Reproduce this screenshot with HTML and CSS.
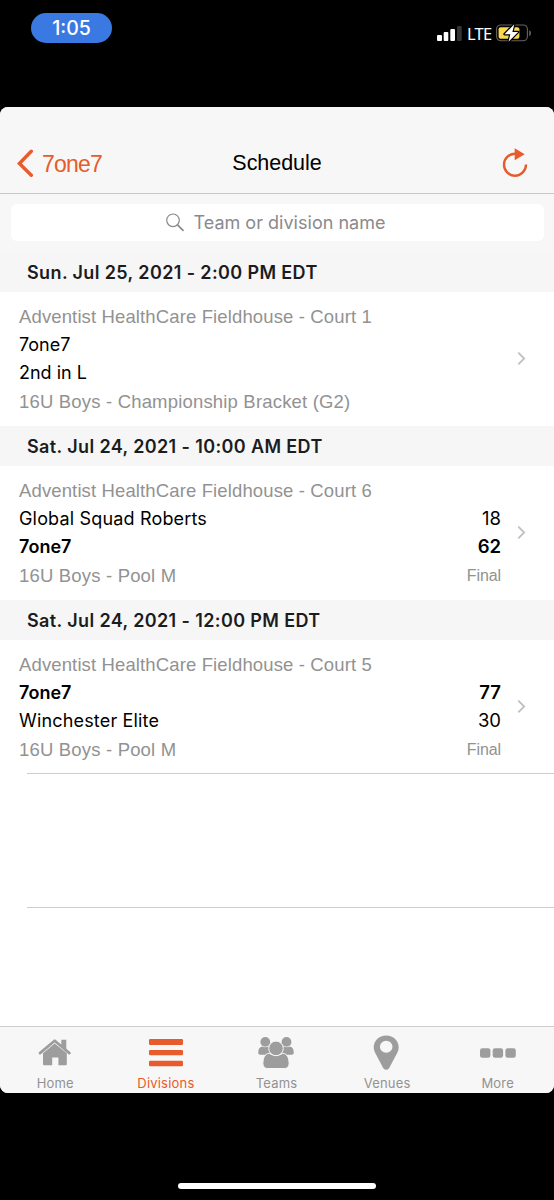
FILE: index.html
```html
<!DOCTYPE html>
<html lang="en">
<head>
<meta charset="utf-8">
<title>Schedule</title>
<link rel="stylesheet" href="styles.css">
</head>
<body>
<div class="statusbar">
  <div class="clock"><span>1:05</span></div>
  <div class="signals">
    <svg width="25" height="16" viewBox="0 0 25 16"><g fill="#fff"><rect x="0" y="10" width="5" height="6" rx="1"/><rect x="6.7" y="7" width="4.6" height="9" rx="1"/><rect x="13.3" y="4" width="4.7" height="12" rx="1"/></g><rect x="20" y="1" width="4.7" height="15" rx="1" fill="#343434"/></svg>
    <span class="carrier">LTE</span>
    <svg class="battery" width="36" height="18" viewBox="0 0 36 18"><rect x=".6" y="1" width="30.8" height="15.8" rx="4.3" fill="none" stroke="#68645c" stroke-width="1.1"/><rect x="2.6" y="3.2" width="20.8" height="11.5" rx="2" fill="#f8d94b"/><path d="M33.2 6.2c2.4.6 2.4 5.2 0 5.8z" fill="#68645c"/><path d="M18.3.2 8.5 10.2h5.8l-1.8 7.6 9.7-9.9h-5.8z" fill="#fff" stroke="#000" stroke-width="2.4" paint-order="stroke" stroke-linejoin="round"/></svg>
  </div>
</div>
<main class="app">
  <header class="nav">
    <div class="back">
      <svg width="17" height="29" viewBox="0 0 17 29"><path d="M14.3 2.3 2.4 14.5l11.9 11.7" fill="none" stroke="#e75b2c" stroke-width="3.4" stroke-linecap="round"/></svg>
      <span class="back-label">7one7</span>
    </div>
    <h1 class="title"><span>Schedule</span></h1>
    <svg class="refresh" width="26" height="30" viewBox="0 0 26 30"><path d="M13.5 5.7A11 11 0 1 0 24 16.5" fill="none" stroke="#e75b2c" stroke-width="2.4"/><path d="M12.7.2v12.1l10-6.1z" fill="#e75b2c"/></svg>
  </header>
  <div class="search">
    <div class="field">
      <svg width="18" height="19" viewBox="0 0 18 19"><circle cx="7" cy="7.3" r="6.3" fill="none" stroke="#8a8a8e" stroke-width="1.2"/><path d="m11.5 11.8 5.5 5.5" stroke="#8a8a8e" stroke-width="1.7" stroke-linecap="round"/></svg>
      <span class="placeholder">Team or division name</span>
    </div>
  </div>
  <section>
    <h2 class="date">Sun. Jul 25, 2021 - 2:00 PM EDT</h2>
    <div class="game">
      <p class="meta venue"><span>Adventist HealthCare Fieldhouse - Court 1</span></p>
      <div class="team"><span>7one7</span></div>
      <div class="team"><span>2nd in L</span></div>
      <p class="meta pool"><span>16U Boys - Championship Bracket (G2)</span></p>
      <svg class="chevron" width="9" height="14" viewBox="0 0 9 14"><path d="m1.3 .6 5.9 5.9-5.9 5.9" fill="none" stroke="#c0c0c2" stroke-width="1.8"/></svg>
    </div>
  </section>
  <section>
    <h2 class="date">Sat. Jul 24, 2021 - 10:00 AM EDT</h2>
    <div class="game">
      <p class="meta venue"><span>Adventist HealthCare Fieldhouse - Court 6</span></p>
      <div class="team"><span class="long">Global Squad Roberts</span><span class="score">18</span></div>
      <div class="team winner"><span>7one7</span><span class="score">62</span></div>
      <p class="meta pool"><span>16U Boys - Pool M</span><span class="final">Final</span></p>
      <svg class="chevron" width="9" height="14" viewBox="0 0 9 14"><path d="m1.3 .6 5.9 5.9-5.9 5.9" fill="none" stroke="#c0c0c2" stroke-width="1.8"/></svg>
    </div>
  </section>
  <section>
    <h2 class="date">Sat. Jul 24, 2021 - 12:00 PM EDT</h2>
    <div class="game">
      <p class="meta venue"><span>Adventist HealthCare Fieldhouse - Court 5</span></p>
      <div class="team winner"><span>7one7</span><span class="score">77</span></div>
      <div class="team"><span class="long">Winchester Elite</span><span class="score">30</span></div>
      <p class="meta pool"><span>16U Boys - Pool M</span><span class="final">Final</span></p>
      <svg class="chevron" width="9" height="14" viewBox="0 0 9 14"><path d="m1.3 .6 5.9 5.9-5.9 5.9" fill="none" stroke="#c0c0c2" stroke-width="1.8"/></svg>
    </div>
  </section>
  <div class="empty-row"></div>
  <nav class="tabs">
    <div class="tab"><svg width="34" height="34" viewBox="0 0 34 34"><path d="M2 17.1 16.7 4.7l14.7 12.4" fill="none" stroke="#9d9d9d" stroke-width="2.7" stroke-linecap="round" stroke-linejoin="round"/><path d="M23.3 3.8h5v10l-5-4.2z" fill="#9d9d9d"/><path d="M5 17.2 16.7 7.5l12.1 9.7v11.1q0 .9-1 .9h-7.4v-7.7h-6.2v7.7H6q-1 0-1-.9z" fill="#9d9d9d"/></svg><span>Home</span></div>
    <div class="tab active"><svg width="34" height="34" viewBox="0 0 34 34"><g fill="#e75b2c"><rect y="3" width="34" height="6" rx="1.2"/><rect y="14" width="34" height="5.2" rx="1.2"/><rect y="24.7" width="34" height="5.5" rx="1.2"/></g></svg><span>Divisions</span></div>
    <div class="tab"><svg width="36" height="34" viewBox="0 0 36 34"><g fill="#9d9d9d"><circle cx="7.3" cy="5.9" r="4.9"/><circle cx="28.5" cy="5.9" r="4.9"/><path d="M4 10.6Q.3 11.3.2 16.8q.1 2 2 2h9l3-6q-1.8-2.1-3.7-2.2-3.2 1.5-6.5 0zM32 10.6q3.7.7 3.8 6.2-.1 2-2 2h-9l-3-6q1.8-2.1 3.7-2.2 3.2 1.5 6.5 0z"/></g><path d="M11.2 17.4q6.8 3.8 13.6 0c4.8 0 6.3 5.5 6.3 10 0 3.5-1.9 5.1-4.8 5.1H9.7c-2.9 0-4.8-1.6-4.8-5.1 0-4.5 1.5-10 6.3-10z" fill="#9d9d9d" stroke="#f7f7f7"/><circle cx="18" cy="12.4" r="7.3" fill="#9d9d9d" stroke="#f7f7f7"/></svg><span>Teams</span></div>
    <div class="tab"><svg width="34" height="34" viewBox="0 0 34 34"><path fill="#9d9d9d" fill-rule="evenodd" d="M16.2-.5C8.9-.5 3.7 4.8 3.7 11.3q0 2.7 1.3 5.2l8.3 15.8q2.9 3 5.8 0l8.3-15.8q1.3-2.5 1.3-5.2C28.7 4.8 23.5-.5 16.2-.5zm0 5.2a6.3 6 0 1 1 0 12 6.3 6 0 0 1 0-12z"/></svg><span>Venues</span></div>
    <div class="tab"><svg width="36" height="34" viewBox="0 0 36 34"><g fill="#9d9d9d"><rect y="12.3" width="10.4" height="9.4" rx="2.3"/><rect x="12.7" y="12.3" width="10.4" height="9.4" rx="2.3"/><rect x="25.4" y="12.3" width="10.4" height="9.4" rx="2.3"/></g></svg><span>More</span></div>
  </nav>
</main>
<div class="home-indicator"></div>
</body>
</html>
```

FILE: styles.css
```css
* { box-sizing: border-box; }
body {
  margin: 0;
  height: 1200px;
  background: #000;
  color: #000;
  font-family: Inter, sans-serif;
  display: flex;
  flex-direction: column;
  align-items: center;
  overflow: hidden;
}
h1, h2, p { margin: 0; font-weight: 400; }
span { white-space: nowrap; }
svg { flex: none; display: block; }
.statusbar {
  width: 100%;
  height: 107px;
  padding: 13px 22px 0 31px;
  display: flex;
  justify-content: space-between;
  align-items: flex-start;
}
.clock {
  width: 81px;
  height: 30px;
  border-radius: 15px;
  background: #3b79e2;
  color: #fff;
  display: flex;
  align-items: center;
  justify-content: center;
  font-size: 19.5px;
  font-weight: 500;
}
.signals { display: flex; color: #fff; padding-top: 12px; align-items: flex-start; }
.carrier {
  width: 24px;
  margin: 0 5px 0 5px;
  font: 400 16.5px/17px "Noto Sans", sans-serif;
  letter-spacing: -.7px;
}
.battery { margin-top: -1px; }
.app {
  width: 100%;
  height: 986px;
  border-radius: 8px;
  overflow: hidden;
  background: #fff;
  display: flex;
  flex-direction: column;
  flex: none;
}
.nav {
  height: 87px;
  padding: 27px 26px 0 17px;
  background: #f7f7f7;
  border-bottom: 1px solid #c8c8ca;
  display: grid;
  grid-template-columns: 1fr auto 1fr;
  align-items: center;
  font-family: "Liberation Sans", sans-serif;
}
.back { display: flex; align-items: center; gap: 8px; color: #e75b2c; }
.back-label { font-size: 23px; letter-spacing: -.8px; padding-top: 1px; }
.title { font-size: 21.5px; letter-spacing: -.05px; padding-left: 9px; }
.refresh { justify-self: end; margin-top: -2px; }
.search { background: #f7f7f7; height: 58px; padding: 10px 10px 0 11px; }
.field {
  height: 37px;
  border-radius: 6px;
  background: #fff;
  display: flex;
  align-items: center;
  justify-content: center;
  gap: 9px;
  padding-right: 3px;
  color: #8a8a8e;
}
.placeholder { font-size: 18px; letter-spacing: .02px; }
.date {
  height: 40px;
  padding: 1px 0 0 27px;
  background: #f6f6f7;
  color: #1c1c1e;
  font-size: 18px;
  line-height: 40px;
  font-weight: 600;
  letter-spacing: .38px;
}
.game {
  height: 134px;
  padding: 11px 53px 0 19px;
  position: relative;
}
.meta {
  font: 18.5px/28px "Liberation Sans", sans-serif;
  letter-spacing: .13px;
  color: #929292;
}
.venue { height: 27px; }
.team {
  height: 28px;
  display: flex;
  justify-content: space-between;
  align-items: center;
  font-size: 18px;
}
.long { letter-spacing: .17px; }
.winner { font-weight: 600; }
.score { font-size: 18.5px; }
.pool {
  height: 32px;
  display: flex;
  justify-content: space-between;
  align-items: center;
  letter-spacing: .18px;
}
.final { font-size: 16px; letter-spacing: -.1px; }
.chevron { position: absolute; right: 28px; top: 60px; }
.empty-row {
  height: 135px;
  margin: -1px 0 0 27px;
  border-top: 1px solid #cececf;
  border-bottom: 1px solid #cececf;
  position: relative;
}
.tabs {
  margin-top: auto;
  height: 67px;
  padding-right: 1px;
  background: #f7f7f7;
  border-top: 1px solid #cececf;
  display: grid;
  grid-template-columns: repeat(5, 1fr);
}
.tab {
  display: flex;
  flex-direction: column;
  align-items: center;
  justify-content: space-between;
  padding: 9px 0 1px;
  color: #929292;
  font-size: 13px;
  line-height: 17px;
  letter-spacing: .2px;
}
.tab svg { height: 34px; overflow: visible; }
.active { color: #e75b2c; }
.home-indicator { width: 198px; height: 6px; margin-top: 90px; border-radius: 3px; background: #fff; }
```
